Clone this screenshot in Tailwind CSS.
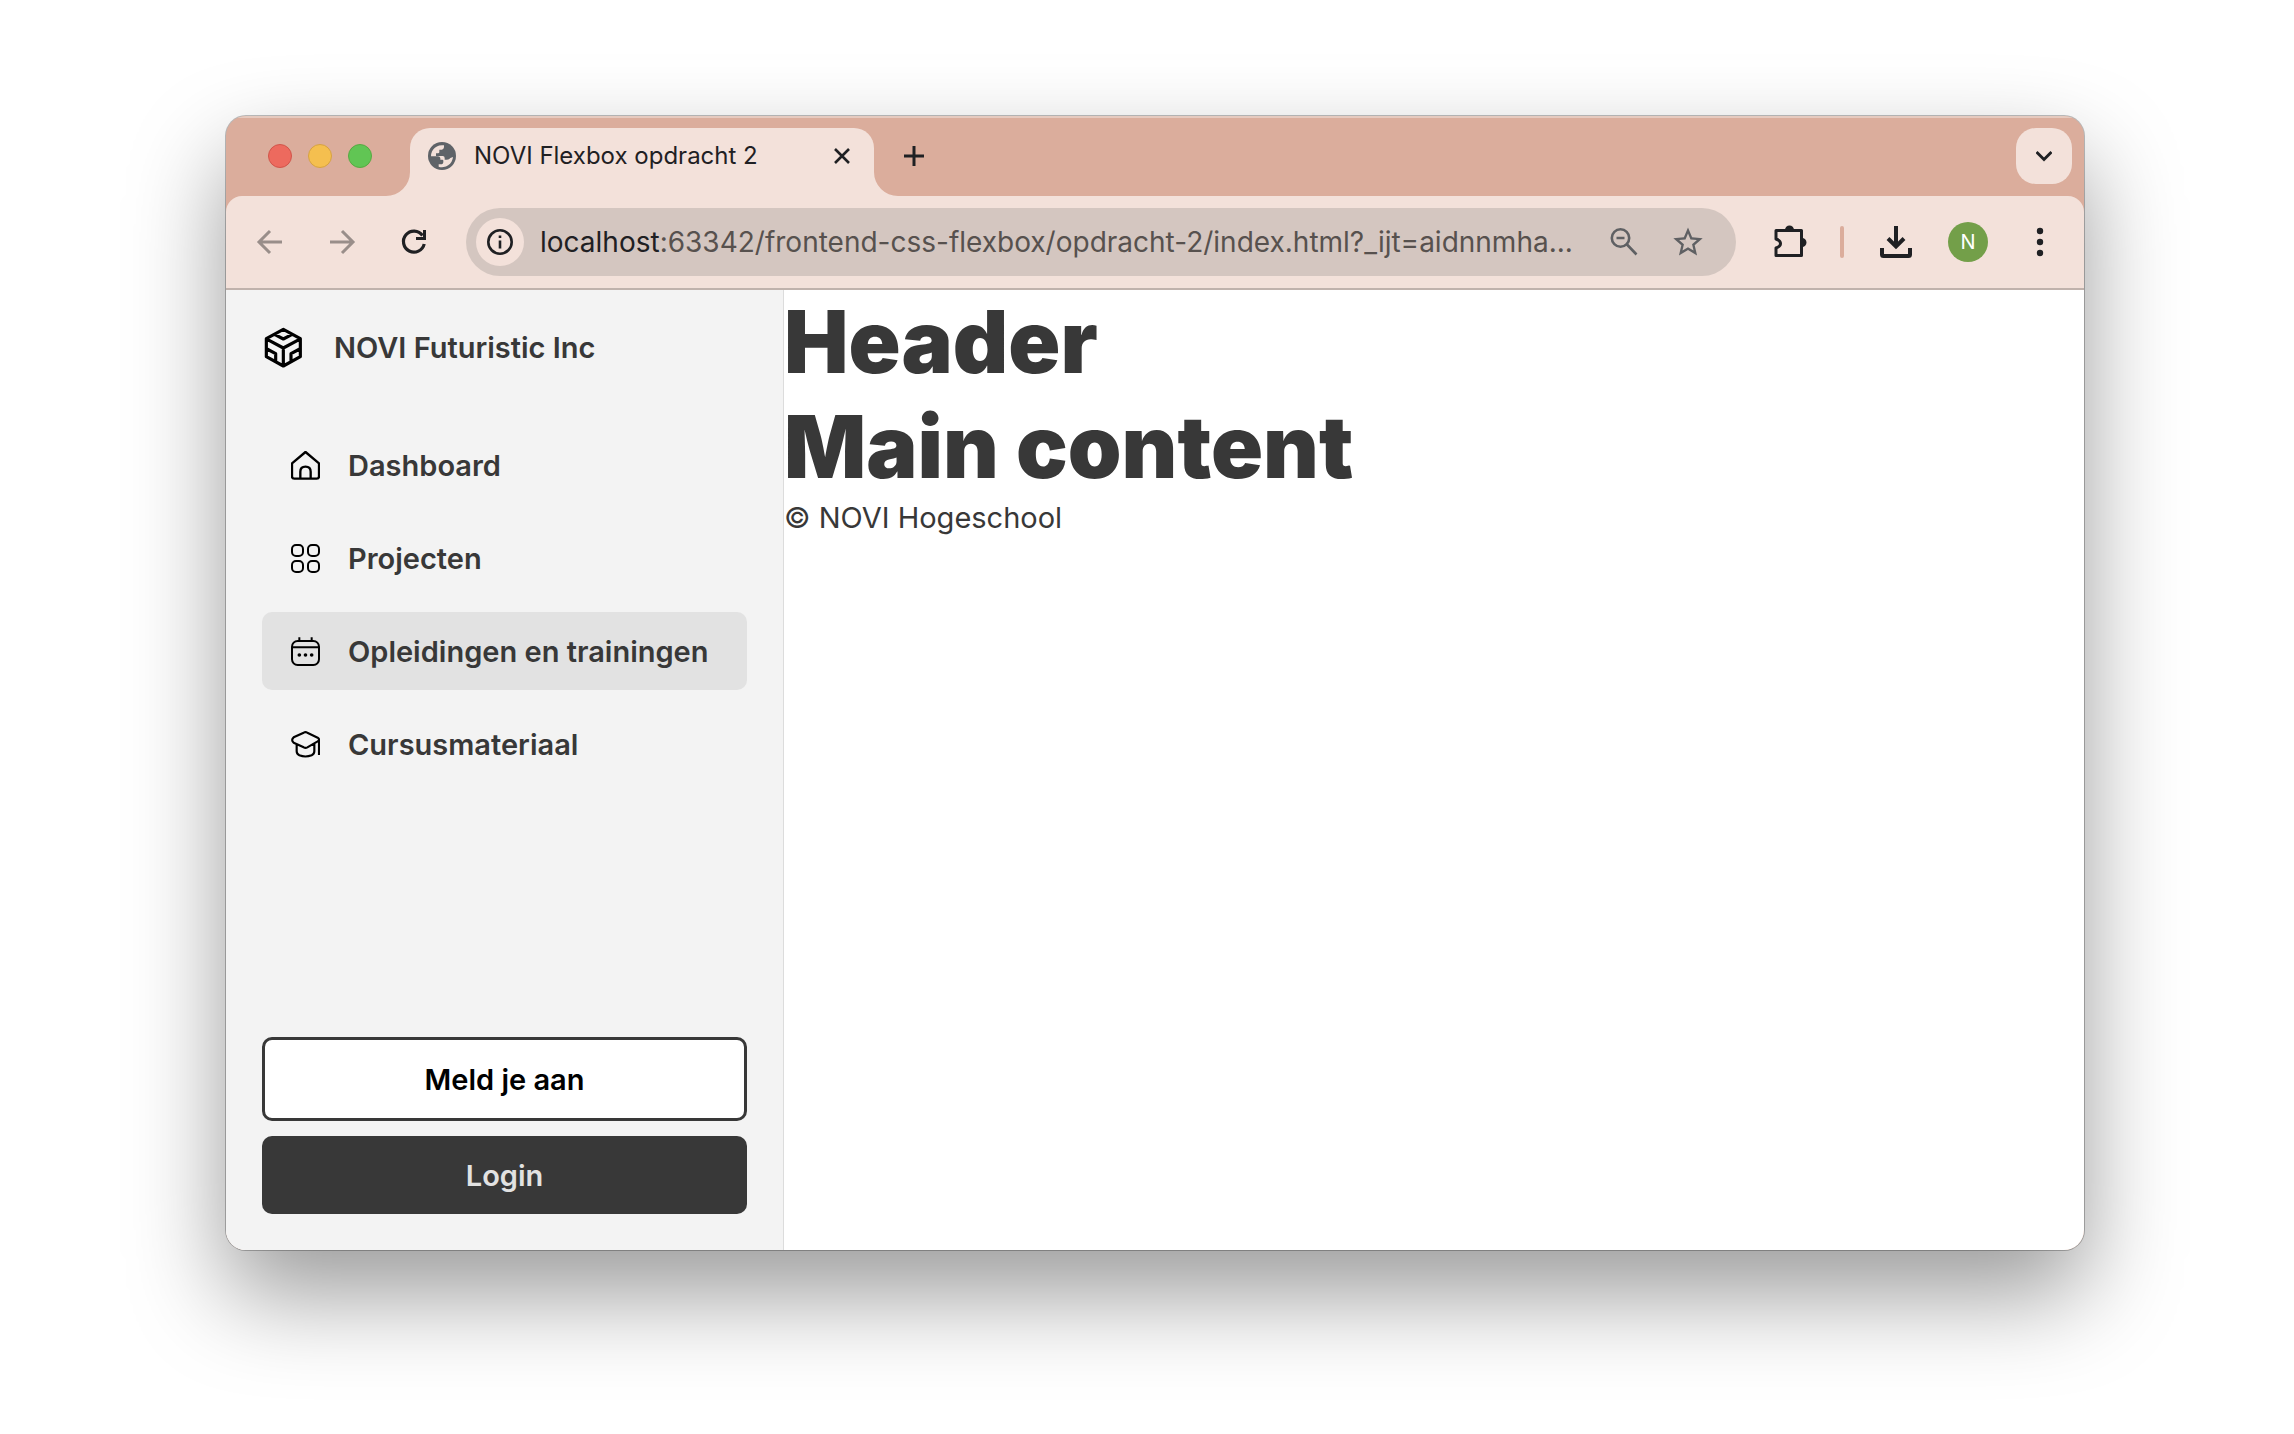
<!DOCTYPE html>
<html lang="nl">
<head>
<meta charset="utf-8">
<title>NOVI Flexbox opdracht 2</title>
<script src="https://cdn.jsdelivr.net/npm/@tailwindcss/browser@4"></script>
</head>
<body class="flex min-h-screen flex-col bg-white pt-[116px] pr-[210px] pb-[184px] pl-[226px] font-['Inter',sans-serif]">
<div class="flex flex-1 flex-col overflow-hidden rounded-[20px] bg-[#dbad9c] shadow-[0_0_0_1px_#00000040,0_44px_96px_#00000066]">

  <!-- Tab strip -->
  <div class="flex h-20 items-end border-t-2 border-[#e6cabf] pr-3 pl-[42px]">
    <div class="flex h-[78px] items-center gap-4 pb-0.5">
      <button aria-label="Sluit venster" class="size-6 rounded-full border border-[#d1554a] bg-[#ed6a5e]"></button>
      <button aria-label="Minimaliseer" class="size-6 rounded-full border border-[#d6a243] bg-[#f5bf4f]"></button>
      <button aria-label="Maximaliseer" class="size-6 rounded-full border border-[#58a942] bg-[#61c554]"></button>
    </div>
    <svg class="ml-[14px] size-6 shrink-0" viewBox="0 0 24 24" fill="#f3e1da"><path d="M24 0v24H0A24 24 0 0 0 24 0z"/></svg>
    <div class="flex h-[68px] w-[464px] items-center rounded-t-[20px] bg-[#f3e1da] pr-5 pb-3 pl-[18px] text-[#1f2023]">
      <svg class="size-7 shrink-0" viewBox="-42 -42 84 84"><circle r="42" fill="#5f6368"/><path fill="#f3e1da" d="M-33 1A33 33 0 0 1 6-32V-26Q5-19-1-19H-8V-11Q-8-8-12-8H-18V0H2Q8 0 8 6V11H15Q22 11 25 6L33 3A33 33 0 0 1-10 32V25H-4Q4 25 4 17V14Q4 11 1 11H-5V6Q-6 1-12 1z"/></svg>
      <span class="ml-[18px] flex-1 whitespace-nowrap text-2xl">NOVI Flexbox opdracht 2</span>
      <button aria-label="Sluit tabblad" class="flex size-6 items-center justify-center"><svg class="size-4" viewBox="0 0 16 16" fill="none" stroke="#1f2023" stroke-width="2.6"><path d="M1 1l14 14M15 1L1 15"/></svg></button>
    </div>
    <svg class="size-6 shrink-0" viewBox="0 0 24 24" fill="#f3e1da"><path d="M0 0v24h24A24 24 0 0 1 0 0z"/></svg>
    <button aria-label="Nieuw tabblad" class="mb-[30px] ml-[6px] size-5"><svg class="size-5" viewBox="0 0 20 20" fill="none" stroke="#1f2023" stroke-width="3"><path d="M10 0v20M0 10h20"/></svg></button>
    <button aria-label="Zoek tabbladen" class="mb-3 ml-auto flex size-14 items-center justify-center rounded-[20px] bg-[#f3e1da]"><svg class="size-4" viewBox="0 0 16 16" fill="none" stroke="#1f2023" stroke-width="3"><path d="M0.500 4L8 11.500 15.500 4"/></svg></button>
  </div>

  <!-- Toolbar -->
  <div class="flex h-[94px] items-center rounded-t-2xl border-b-2 border-[#c0b2ac] bg-[#f3e1da] pr-7 pl-[30px]">
    <button aria-label="Terug" class="size-7"><svg class="size-7" viewBox="0 0 28 28" fill="none" stroke="#998e8a" stroke-width="3"><path d="M26 14H4M14 3L3 14l11 11"/></svg></button>
    <button aria-label="Vooruit" class="ml-11 size-7"><svg class="size-7" viewBox="0 0 28 28" fill="none" stroke="#998e8a" stroke-width="3"><path d="M2 14h22M14 3l11 11-11 11"/></svg></button>
    <button aria-label="Vernieuw" class="ml-11 size-7"><svg class="size-7" viewBox="0 0 28 28"><path fill="none" stroke="#1f2023" stroke-width="3.200" d="M22.500 7.500A10.500 10.500 0 1 0 24.200 16"/><path fill="#1f2023" d="M26 2v10H16V9h7V2z"/></svg></button>
    <div class="ml-[38px] flex h-[68px] min-w-0 flex-1 items-center rounded-full bg-[#d4c6c0] pr-8 pl-[10px]">
      <button aria-label="Sitegegevens" class="flex size-12 shrink-0 items-center justify-center rounded-full bg-[#f3e1da]"><svg class="size-7" viewBox="0 0 28 28" fill="none" stroke="#1f2023" stroke-width="2.600"><circle cx="14" cy="14" r="11.700"/><path d="M14 12.500v8M14 7.500v2.600"/></svg></button>
      <div class="ml-4 min-w-0 flex-1 whitespace-nowrap text-[28px] text-[#57514e]"><span class="text-[#1f2023]">localhost</span>:63342/frontend-css-flexbox/opdracht-2/index.html?_ijt=aidnnmha...</div>
      <button aria-label="Zoom" class="size-7"><svg class="size-7" viewBox="0 0 28 28" fill="none" stroke="#5f6063" stroke-width="2.600"><circle cx="10.500" cy="10" r="8.700"/><path d="M6.500 10h8M16.500 16l10 10.500"/></svg></button>
      <button aria-label="Bladwijzer" class="ml-[34px] size-8"><svg class="size-8" viewBox="0 0 24 24" fill="#5f6063"><path d="M22 9.240l-7.190-.62L12 2 9.190 8.630 2 9.240l5.460 4.730L5.820 21 12 17.270 18.180 21l-1.630-7.030L22 9.240zM12 15.400l-3.760 2.270 1-4.280-3.320-2.880 4.380-.38L12 6.100l1.710 4.040 4.380.38-3.320 2.880 1 4.280L12 15.400z" transform="translate(-1.200 -1) scale(1.100)"/></svg></button>
    </div>
    <button aria-label="Extensies" class="ml-9 size-9"><svg class="size-9" viewBox="0 0 36 36"><path fill="none" stroke="#1f2023" stroke-width="3" stroke-linejoin="round" d="M4 6.500h25.500v25H4v-7.500c6-2 6-7 0-9z"/><path fill="#1f2023" d="M13 6a4.500 4.500 0 0 1 9 0zM30 14a4.500 4.500 0 0 1 0 9z"/></svg></button>
    <span class="ml-8 h-8 w-1 rounded-full bg-[#dbad9c]"></span>
    <button aria-label="Downloads" class="ml-9 size-8"><svg class="size-8" viewBox="0 0 32 32" fill="none" stroke="#1f2023" stroke-width="4"><path d="M16 0v20M8 12.500l8 8 8-8M2 22v6.500q0 1.500 1.500 1.500h25q1.500 0 1.500-1.500V22"/></svg></button>
    <button class="ml-9 size-10 rounded-full bg-[#739f49] text-xl text-white">N</button>
    <button aria-label="Menu" class="ml-9 h-8 w-8"><svg class="mx-auto h-8 w-8" viewBox="0 0 32 32" fill="#1f2023"><circle cx="16" cy="5" r="3.200"/><circle cx="16" cy="16" r="3.200"/><circle cx="16" cy="27" r="3.200"/></svg></button>
  </div>

  <!-- Page -->
  <div class="flex flex-1 bg-white text-[29px] leading-[35px] text-[#383838]">
    <aside class="flex w-[558px] shrink-0 flex-col border-r border-[#dcdcdc] bg-[#f3f3f3] p-9 font-semibold">
      <div class="flex items-center gap-[29px]">
        <svg class="size-[43px]" viewBox="126 108 129 129" fill="none" stroke="#000" stroke-width="9.500" stroke-linejoin="round" stroke-linecap="round"><path d="M190 118l51 28v54l-51 28-51-28v-54zM143 149l47 25 47-25M190 174v52M165 134l25 13 25-13M141 177l26 14v22M239 177l-26 14v22"/></svg>
        <span>NOVI Futuristic Inc</span>
      </div>
      <nav class="mt-[57px]">
        <ul class="flex flex-col gap-[15px]">
          <li><a href="#" class="flex h-[78px] items-center gap-7 rounded-[10px] pl-[29px]"><svg class="size-[29px]" viewBox="0 0 87 87" fill="none" stroke="#000" stroke-width="7" stroke-linejoin="round"><path d="M43.500 3L84 37v39q0 7-7 7H10q-7 0-7-7V37zM28 83V62q0-15 15.500-15T59 62v21"/></svg>Dashboard</a></li>
          <li><a href="#" class="flex h-[78px] items-center gap-7 rounded-[10px] pl-[29px]"><svg class="size-[29px]" viewBox="0 0 87 87" fill="none" stroke="#000" stroke-width="6"><rect x="3" y="3" width="33" height="33" rx="12"/><rect x="51" y="3" width="33" height="33" rx="12"/><rect x="3" y="51" width="33" height="33" rx="12"/><rect x="51" y="51" width="33" height="33" rx="12"/></svg>Projecten</a></li>
          <li><a href="#" class="flex h-[78px] items-center gap-7 rounded-[10px] bg-[#e2e2e2] pl-[29px]"><svg class="size-[29px]" viewBox="0 0 87 87" fill="none" stroke="#000" stroke-width="6"><rect x="3" y="12" width="81" height="72" rx="17"/><path d="M3 31h81M25 1v11M62 1v11"/><g fill="#000" stroke="none"><circle cx="25" cy="54" r="5.500"/><circle cx="43.500" cy="54" r="5.500"/><circle cx="62" cy="54" r="5.500"/></g></svg>Opleidingen en trainingen</a></li>
          <li><a href="#" class="flex h-[78px] items-center gap-7 rounded-[10px] pl-[29px]"><svg class="size-[29px]" viewBox="0 -3 87 87" fill="none" stroke="#000" stroke-width="6.500" stroke-linejoin="round"><path d="M38 5q5.500-3 11 0l31 15q8 5 0 11L49 49q-5.500 3-11 0L8 35q-9-8 0-16zM84 25v47M17 39v22q0 8 8 12q18 7 37 0q8-4 8-12V39"/></svg>Cursusmateriaal</a></li>
        </ul>
      </nav>
      <div class="mt-auto flex flex-col gap-[15px]">
        <button class="h-[84px] rounded-[10px] border-3 border-[#383838] bg-white text-black">Meld je aan</button>
        <button class="h-[78px] rounded-[10px] bg-[#383838] text-[#e2e2e2]">Login</button>
      </div>
    </aside>
    <div class="min-w-0 flex-1">
      <header><h1 class="text-[86px] leading-[105px] font-black">Header</h1></header>
      <main><h1 class="text-[86px] leading-[105px] font-black">Main content</h1></main>
      <footer><p>© NOVI Hogeschool</p></footer>
    </div>
  </div>
</div>
</body>
</html>
